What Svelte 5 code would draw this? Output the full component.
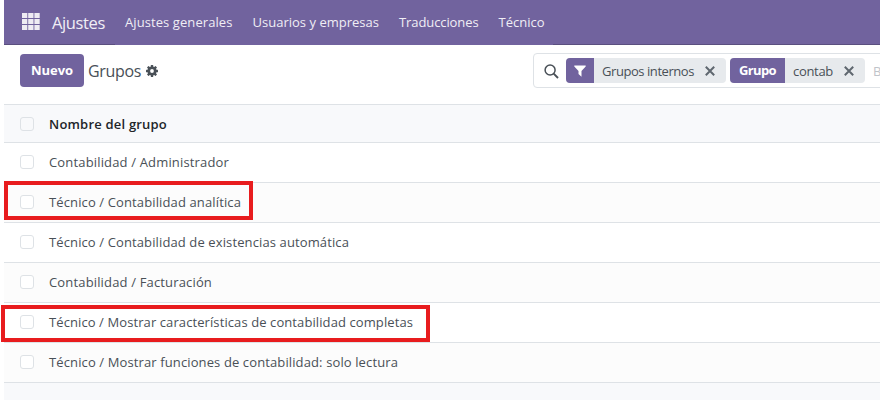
<script>
  const menus = [
    { label: 'Ajustes generales', x: 107.5 },
    { label: 'Usuarios y empresas', x: 126.5 },
    { label: 'Traducciones', x: 79.5 },
    { label: 'Técnico', x: 46 }
  ];
  const rows = [
    { name: 'Contabilidad / Administrador', w: 180 },
    { name: 'Técnico / Contabilidad analítica', w: 192, mark: 'first' },
    { name: 'Técnico / Contabilidad de existencias automática', w: 300 },
    { name: 'Contabilidad / Facturación', w: 163 },
    { name: 'Técnico / Mostrar características de contabilidad completas', w: 364, mark: 'second' },
    { name: 'Técnico / Mostrar funciones de contabilidad: solo lectura', w: 349 }
  ];

  // Spreads a label over its column width by adjusting the letter spacing.
  function fit(node, width) {
    const natural = node.getBoundingClientRect().width;
    node.style.letterSpacing = (width - natural) / node.textContent.length + 'px';
  }
</script>

<div class="app">
  <nav>
    <svg class="apps" viewBox="0 0 18 17" fill="#eeecf3">
      {#each [0, 6, 12] as y}
        {#each [0, 6.2, 12.4] as x}
          <rect {x} {y} width="5.3" height="5" />
        {/each}
      {/each}
    </svg>
    <span class="brand"><span use:fit={53}>Ajustes</span></span>
    {#each menus as m}
      <span class="menu" style:width="{m.x}px"><span use:fit={m.x}>{m.label}</span></span>
    {/each}
    <i class="edge left"></i><i class="edge right"></i>
  </nav>

  <header>
    <button class="new"><span use:fit={42}>Nuevo</span></button>
    <span class="title"><span use:fit={53}>Grupos</span></span>
    <svg class="gear" viewBox="0 0 12 12">
      <g fill="#495057">
        {#each [0, 45, 90, 135] as a}
          <rect x="4.8" y="0" width="2.4" height="12" rx=".5" transform="rotate({a} 6 6)" />
        {/each}
        <circle cx="6" cy="6" r="4.6" />
      </g>
      <circle cx="6" cy="6" r="1.9" fill="#fff" />
    </svg>
    <div class="search">
      <svg class="lens" viewBox="0 0 15 15" fill="none" stroke="#495057">
        <circle cx="6.1" cy="6" r="5" stroke-width="1.5" />
        <path d="M9.7 9.7 14 14" stroke-width="1.9" />
      </svg>
      <div class="facet one">
        <b class="icon"><svg viewBox="0 0 12 12"><path d="M.3.5h11.4v1L7.5 6v5.7L4.5 9V6L.3 1.5z" fill="#fff" /></svg></b>
        <span class="value"><span use:fit={92}>Grupos internos</span></span>
        <svg class="x" viewBox="0 0 10 10"><path d="m.8.8 8.4 8.4M9.2.8.8 9.2" /></svg>
      </div>
      <div class="facet two">
        <b class="word"><span use:fit={37}>Grupo</span></b>
        <span class="value"><span use:fit={40}>contab</span></span>
        <svg class="x" viewBox="0 0 10 10"><path d="m.8.8 8.4 8.4M9.2.8.8 9.2" /></svg>
      </div>
      <span class="hint">B</span>
    </div>
  </header>

  <div class="table">
    <div class="row head"><i class="box"></i><span use:fit={118}>Nombre del grupo</span></div>
    {#each rows as r}
      <div class="row">
        <i class="box"></i><span use:fit={r.w}>{r.name}</span>
        {#if r.mark}<div class="mark {r.mark}"></div>{/if}
      </div>
    {/each}
  </div>
</div>

<style>
  :global(body) { margin: 0; background: #fff; }
  .app {
    width: 876px; height: 400px; margin-left: 4px;
    display: flex; flex-direction: column;
    background: #f8f9fb; color: #495057;
    font: 13px/20px "Open Sans", "Noto Sans", sans-serif;
    white-space: nowrap;
  }
  .app, .app * { box-sizing: border-box; }
  nav {
    position: relative; height: 45px; flex: none; display: flex; align-items: center;
    padding: 0 0 2px 18px; background: #71639e; color: #f0eef5;
  }
  .apps { width: 18px; height: 17px; }
  .brand { width: 53px; margin: 2px 20px 0 12px; font-size: 16.5px; }
  .menu { margin-right: 20px; }
  .edge { position: absolute; bottom: 0; height: 1px; background: #5a4f7f; }
  .left { left: 0; width: 111px; }
  .right { left: 549px; right: 0; }
  header {
    height: 59px; flex: none; display: flex; align-items: flex-start;
    padding: 8px 0 0 16px; background: #fff; overflow: hidden;
  }
  header > * { flex: none; }
  .new {
    width: 64px; height: 33px; margin-top: 1px; padding: 0; border: 0; border-radius: 4px;
    background: #71639e; color: #fff; font: 700 13px/33px "Open Sans", sans-serif;
  }
  .title { width: 53px; margin: 8px 5px 0 4px; font-size: 16px; }
  .gear { width: 12px; height: 12px; margin-top: 12px; }
  .search {
    display: flex; align-items: flex-start; width: 420px; height: 35px; margin-left: 375px;
    padding: 4px 0 0 10px; border: 1px solid #dee2e6; border-radius: 4px;
  }
  .lens { width: 15px; height: 15px; margin: 6px 7px 0 0; }
  .facet {
    display: flex; align-items: center; height: 25px; flex: none; margin-right: 4px;
    border-radius: 4px; background: #e7eaed; overflow: hidden;
  }
  .one { width: 160px; }
  .two { width: 135px; }
  .facet b { height: 25px; line-height: 25px; background: #71639e; color: #fff; }
  .icon { width: 28px; padding: 7px 8px; margin-right: 8px; }
  .icon svg { display: block; width: 12px; height: 12px; }
  .word { width: 55px; padding-left: 9px; margin-right: 8px; }
  .one .value { width: 92px; margin-right: 11px; }
  .two .value { width: 40px; margin-right: 11px; }
  .x { width: 10px; height: 10px; stroke: #5f676f; stroke-width: 2; }
  .hint { margin: 3px 0 0 4px; color: #bfc4ca; }
  .row {
    position: relative; display: flex; align-items: center; height: 40px;
    padding: 0 0 1px 16px; border-bottom: 1px solid #dee2e6; background: #fff;
  }
  .row:nth-child(odd) { background: #fcfcfc; }
  .row.head {
    height: 39px; padding-bottom: 0; border-top: 1px solid #dee2e6;
    background: #f8f9fb; color: #212529; font-weight: 600;
  }
  .box { width: 14px; height: 14px; margin-right: 15px; border: 1px solid #dee2e6; border-radius: 3px; background: #fff; }
  .head .box { background: none; }
  .mark { position: absolute; border: 4px solid #e81c1e; z-index: 1; }
  .first { left: 0; top: -2px; width: 249px; height: 39px; }
  .second { left: -3px; top: 2px; width: 429px; height: 37px; }
</style>
